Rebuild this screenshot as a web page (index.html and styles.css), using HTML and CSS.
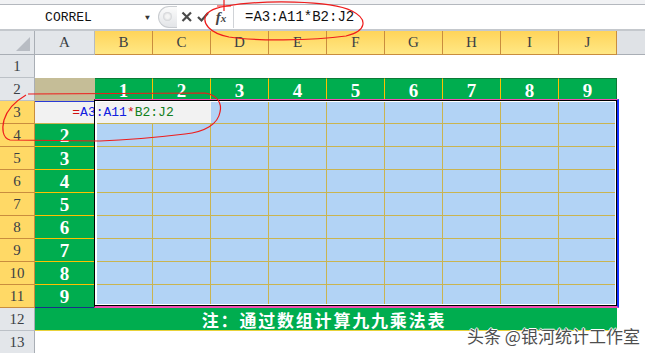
FILE: index.html
```html
<!DOCTYPE html>
<html lang="zh-CN">
<head>
    <meta charset="UTF-8">
    <meta name="viewport" content="width=device-width, initial-scale=1.0">
    <title>九九乘法表</title>
    <link rel="stylesheet" href="styles.css">
</head>
<body>
    <div class="ribbon-edge"></div>
    <div class="formula-bar">
        <div class="name-box">CORREL</div>
        <div class="name-drop">&#9660;</div>
        <div class="bar-tools">
            <span class="knob"></span>
            <svg class="tool-x" width="14" height="14" viewBox="0 0 14 14"><path d="M2.5 2.5 L11 11 M11 2.5 L2.5 11" /></svg>
            <svg class="tool-ok" width="14" height="14" viewBox="0 0 14 14"><path d="M2 7 L5.5 10.5 L12 3" /></svg>
            <span class="tool-fx">f<small>x</small></span>
        </div>
        <div class="formula-input">=A3:A11*B2:J2</div>
    </div>

    <div class="sheet">
        <!-- column headers -->
        <div class="corner"><span class="corner-tri"></span></div>
        <div class="hd">A</div>
        <div class="hd sel">B</div>
        <div class="hd sel">C</div>
        <div class="hd sel">D</div>
        <div class="hd sel">E</div>
        <div class="hd sel">F</div>
        <div class="hd sel">G</div>
        <div class="hd sel">H</div>
        <div class="hd sel">I</div>
        <div class="hd sel">J</div>
        <div class="hd-fill"></div>

        <!-- row 1 -->
        <div class="rh">1</div>
        <div class="blank span10"></div>
        <div class="blank"></div>

        <!-- row 2 -->
        <div class="rh">2</div>
        <div class="tan"></div>
        <div class="g top">1</div>
        <div class="g top">2</div>
        <div class="g top">3</div>
        <div class="g top">4</div>
        <div class="g top">5</div>
        <div class="g top">6</div>
        <div class="g top">7</div>
        <div class="g top">8</div>
        <div class="g top last">9</div>
        <div class="blank"></div>

        <!-- row 3 -->
        <div class="rh sel">3</div>
        <div class="edit"><span class="op">=</span><span class="ref-a">A3:A11</span><span class="op">*</span><span class="ref-b">B2:J2</span></div>
        <div class="b"></div><div class="b"></div><div class="b"></div><div class="b"></div><div class="b"></div><div class="b"></div><div class="b"></div>
        <div class="blank"></div>

        <!-- rows 4-11 -->
        <div class="rh sel">4</div>
        <div class="g col">2</div>
        <div class="b"></div><div class="b"></div><div class="b"></div><div class="b"></div><div class="b"></div><div class="b"></div><div class="b"></div><div class="b"></div><div class="b"></div>
        <div class="blank"></div>

        <div class="rh sel">5</div>
        <div class="g col">3</div>
        <div class="b"></div><div class="b"></div><div class="b"></div><div class="b"></div><div class="b"></div><div class="b"></div><div class="b"></div><div class="b"></div><div class="b"></div>
        <div class="blank"></div>

        <div class="rh sel">6</div>
        <div class="g col">4</div>
        <div class="b"></div><div class="b"></div><div class="b"></div><div class="b"></div><div class="b"></div><div class="b"></div><div class="b"></div><div class="b"></div><div class="b"></div>
        <div class="blank"></div>

        <div class="rh sel">7</div>
        <div class="g col">5</div>
        <div class="b"></div><div class="b"></div><div class="b"></div><div class="b"></div><div class="b"></div><div class="b"></div><div class="b"></div><div class="b"></div><div class="b"></div>
        <div class="blank"></div>

        <div class="rh sel">8</div>
        <div class="g col">6</div>
        <div class="b"></div><div class="b"></div><div class="b"></div><div class="b"></div><div class="b"></div><div class="b"></div><div class="b"></div><div class="b"></div><div class="b"></div>
        <div class="blank"></div>

        <div class="rh sel">9</div>
        <div class="g col">7</div>
        <div class="b"></div><div class="b"></div><div class="b"></div><div class="b"></div><div class="b"></div><div class="b"></div><div class="b"></div><div class="b"></div><div class="b"></div>
        <div class="blank"></div>

        <div class="rh sel">10</div>
        <div class="g col">8</div>
        <div class="b"></div><div class="b"></div><div class="b"></div><div class="b"></div><div class="b"></div><div class="b"></div><div class="b"></div><div class="b"></div><div class="b"></div>
        <div class="blank"></div>

        <div class="rh sel">11</div>
        <div class="g col end">9</div>
        <div class="b"></div><div class="b"></div><div class="b"></div><div class="b"></div><div class="b"></div><div class="b"></div><div class="b"></div><div class="b"></div><div class="b"></div>
        <div class="blank"></div>

        <!-- row 12 -->
        <div class="rh">12</div>
        <div class="note span10">注：通过数组计算九九乘法表</div>
        <div class="blank"></div>

        <!-- row 13 -->
        <div class="rh">13</div>
        <div class="blank span10"></div>
        <div class="blank"></div>

        <div class="range"></div>
    </div>

    <svg class="marks" width="645" height="353" viewBox="0 0 645 353">
        <path d="M224 0 V11 M217 6 H231" />
        <path d="M226 6 C262 0 330 0 352 11 C368 19 367 31 346 36 C312 41 252 41 229 37 C209 33 202 23 206 15 C210 9 218 7 240 4" />
        <path d="M28 94 L205 93 C218 95 222 104 220 112 C218 124 205 132 185 134 C160 137 130 140 100 141 L10 140 C2 138 2 128 4 120 C7 110 14 102 26 95" />
    </svg>

    <div class="watermark">头条 @银河统计工作室</div>
</body>
</html>
```

FILE: styles.css
```css
body {
    margin: 0;
    width: 645px;
    height: 353px;
    overflow: hidden;
    position: relative;
    background-color: #ffffff;
    font-family: "Liberation Serif", serif;
}

.ribbon-edge {
    height: 4px;
    background-color: #f1f2f4;
    border-bottom: 1px solid #b4b8be;
}

.formula-bar {
    display: flex;
    align-items: center;
    height: 24px;
    border-bottom: 2px solid #c4c8cd;
    font-family: "Liberation Mono", monospace;
    font-size: 13px;
    color: #111;
}

.name-box {
    width: 137px;
    text-align: center;
}

.name-drop {
    width: 21px;
    font-size: 8px;
    color: #333;
    text-align: center;
}

.bar-tools {
    display: flex;
    align-items: center;
    width: 76px;
    height: 22px;
    border-right: 1px solid #d0d3d7;
    box-sizing: border-box;
}

.knob {
    width: 18px;
    height: 20px;
    margin-right: 3px;
    border: 1px solid #c9ccd0;
    border-right: none;
    border-radius: 11px 0 0 11px;
    background: linear-gradient(#fbfbfb, #e3e5e8);
    position: relative;
}

.knob::after {
    content: "";
    position: absolute;
    left: 4px;
    top: 5px;
    width: 9px;
    height: 9px;
    border-radius: 50%;
    background: radial-gradient(#f4f4f4 30%, #b9bcc1);
}

.tool-x path,
.tool-ok path {
    fill: none;
    stroke: #4a4a4a;
    stroke-width: 2.2;
}

.tool-ok {
    margin-left: 2px;
}

.tool-fx {
    width: 22px;
    text-align: center;
    font-family: "Liberation Serif", serif;
    font-style: italic;
    font-weight: bold;
    font-size: 15px;
    color: #444;
}

.tool-fx small {
    font-size: 11px;
}

.formula-input {
    padding-left: 11px;
    font-size: 14px;
}

.sheet {
    position: relative;
    display: grid;
    grid-template-columns: 35px 60px repeat(9, 58px) 1fr;
    grid-template-rows: 24px repeat(13, 23px);
}

.sheet > div {
    box-sizing: border-box;
    display: flex;
    align-items: center;
    justify-content: center;
}

.span10 {
    grid-column: span 10;
}

.corner {
    position: relative;
    background-color: #e3e6ea;
    border-right: 1px solid #a9aeb5;
    border-bottom: 1px solid #a9aeb5;
}

.corner-tri {
    position: absolute;
    right: 4px;
    bottom: 3px;
    width: 0;
    height: 0;
    border-left: 14px solid transparent;
    border-bottom: 14px solid #b8bcc3;
}

.hd {
    background-color: #e3e6ea;
    border-right: 1px solid #b5bac1;
    border-bottom: 1px solid #a9aeb5;
    font-size: 15px;
    color: #3a3f45;
}

.hd.sel {
    background: linear-gradient(#ffd45a, #ffe885);
    border-right-color: #c98d3e;
    border-bottom-color: #c98d3e;
}

.hd-fill {
    background-color: #dfe2e6;
    border-bottom: 1px solid #a9aeb5;
}

.rh {
    background-color: #e3e6ea;
    border-right: 1px solid #a9aeb5;
    border-bottom: 1px solid #bcc1c7;
    font-size: 15px;
    color: #3a3f45;
}

.rh.sel {
    background-color: #ffd966;
    border-right-color: #c98d3e;
    border-bottom-color: #c98d3e;
}

.blank {
    background-color: #ffffff;
}

.tan {
    background-color: #c5bd97;
}

.g {
    background-color: #00ad4f;
    color: #ffffff;
    font-size: 19px;
    font-weight: bold;
    padding-top: 2px;
}

.g.top {
    border-top: 1px solid #0c7a36;
    border-right: 1px solid #ffc000;
}

.g.top.last {
    border-right: 1px solid #0c7a36;
}

.g.col {
    border-right: 1px solid #ffc000;
    border-bottom: 1px solid #ffc000;
}

.g.col.end {
    border-bottom: 1px solid #1b2f8a;
}

.edit {
    grid-column: span 3;
    background-color: #f2f2f2;
    border-top: 1px solid #2a3bd6;
    border-bottom: 1px solid #c9b451;
    font-family: "Liberation Mono", monospace;
    font-size: 13px;
}

.op {
    color: #d01010;
}

.ref-a {
    color: #1020e0;
}

.ref-b {
    color: #118020;
}

.b {
    background-color: #b2d3f5;
    border-right: 1px solid #c9b451;
    border-bottom: 1px solid #c9b451;
}

.note {
    background-color: #00ad4f;
    border-bottom: 1px solid #e8d23a;
    color: #ffffff;
    font-family: "Noto Sans CJK SC", sans-serif;
    font-size: 17px;
    font-weight: bold;
    letter-spacing: 1.8px;
    padding-right: 4px;
}

/* selected range B3:J11 */
.range {
    position: absolute;
    left: 94px;
    top: 68px;
    width: 525px;
    height: 209px;
    box-sizing: border-box;
    border-top: 1px solid #f04cb2;
    border-left: 1px solid #000000;
    border-right: 2px solid #1430ff;
    border-bottom: 2px solid #f04cb2;
    box-shadow: inset 0 1px 0 #000000, inset -1px -1px 0 #000000, inset 0 0 0 2px #ffffff;
}

.marks {
    position: absolute;
    left: 0;
    top: 0;
    pointer-events: none;
}

.marks path {
    fill: none;
    stroke: #ee1c1c;
    stroke-width: 1.2;
}

.watermark {
    position: absolute;
    left: 467px;
    top: 325px;
    white-space: nowrap;
    font-family: "Noto Sans CJK SC", sans-serif;
    font-size: 17px;
    line-height: 22px;
    color: #4e4e4e;
    text-shadow: 1px 0 0 #fff, -1px 0 0 #fff, 0 1px 0 #fff, 0 -1px 0 #fff, 1px 1px 1px #fff;
}
```
